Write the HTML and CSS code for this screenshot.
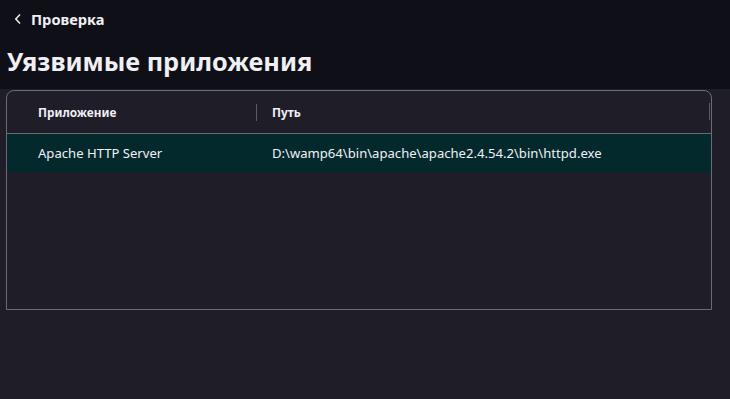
FILE: index.html
```html
<!DOCTYPE html>
<html>
    <head>
        <title>Уязвимые приложения</title>
        <meta charset="UTF-8">
        <link rel="stylesheet" href="styles.css">
    </head>
    <body>
        <header class="top">
            <div class="back">
                <svg class="chevron" width="8" height="12" viewBox="0 0 8 12"><path d="M6 1.5L1.8 6L6 10.5" fill="none" stroke="#e8e8ee" stroke-width="1.6"/></svg>
                <span>Проверка</span>
            </div>
            <h1 class="title">Уязвимые приложения</h1>
        </header>
        <div class="content">
            <div class="grid">
                <div class="grid-head">
                    <div class="col col-app">Приложение</div>
                    <div class="col col-path">Путь</div>
                    <div class="col-end"></div>
                </div>
                <div class="grid-row selected">
                    <div class="col col-app">Apache HTTP Server</div>
                    <div class="col col-path">D:\wamp64\bin\apache\apache2.4.54.2\bin\httpd.exe</div>
                </div>
            </div>
        </div>
    </body>
</html>
```

FILE: styles.css
```css
body{
    margin: 0;
    background-color: #1e1d28;
    font-family: "Noto Sans", "Open Sans", sans-serif;
    color: #f0f0f4;
}
.top{
    background-color: #0f0f17;
    height: 89px;
    padding: 0 7px;
    box-sizing: border-box;
}
.back{
    display: flex;
    align-items: center;
    padding-top: 8px;
    padding-left: 7px;
    height: 22px;
    font-size: 14.6px;
    font-weight: bold;
}
.chevron{
    margin-right: 9px;
}
.title{
    margin: 0;
    margin-top: 14px;
    font-size: 25.3px;
    line-height: 34px;
    font-weight: bold;
}
.content{
    padding: 1px 0 0 6px;
}
.grid{
    width: 706px;
    height: 220px;
    border: solid #6b6a75 1px;
    border-radius: 8px 8px 0 0;
    box-sizing: border-box;
    overflow: hidden;
}
.grid-head{
    display: flex;
    align-items: center;
    height: 42px;
    border-bottom: solid #6b6a75 1px;
    font-size: 11.8px;
    font-weight: bold;
    position: relative;
}
.grid-row{
    display: flex;
    align-items: center;
    height: 38px;
    font-size: 13.1px;
}
.selected{
    background-color: #03292d;
}
.col-app{
    width: 249px;
    padding-left: 31px;
    box-sizing: border-box;
}
.col-path{
    padding-left: 16px;
}
.grid-head .col-path{
    border-left: solid #5c5b66 1px;
    line-height: 17px;
    padding-left: 15px;
}
.col-end{
    position: absolute;
    right: 1px;
    top: 12px;
    height: 17px;
    border-left: solid #5c5b66 1px;
}
```
